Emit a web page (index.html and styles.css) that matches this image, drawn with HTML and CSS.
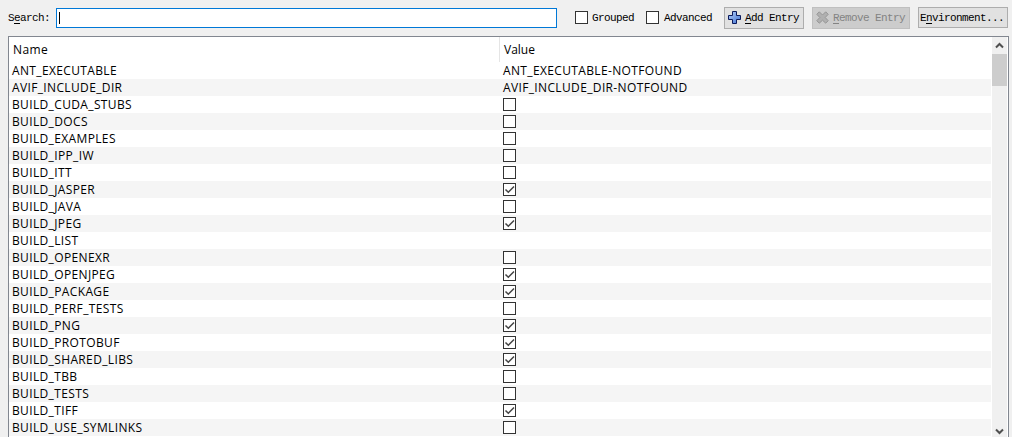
FILE: index.html
```
<!DOCTYPE html>
<html lang="en">
<head>
    <meta charset="utf-8" />
    <title>CMake Cache</title>
    <link rel="stylesheet" href="styles.css">
</head>
<body>
    <div class="toolbar">
        <label class="search-label" for="search">S<u>e</u>arch:</label>
        <div class="search" id="search"><span class="caret"></span></div>
        <div class="option grouped"><span class="check"></span>Grouped</div>
        <div class="option advanced"><span class="check"></span>Advanced</div>
        <div class="button add">
            <svg class="icon" width="14" height="14" viewBox="0 0 14 14">
                <defs>
                    <linearGradient id="blue" x1="0" y1="0" x2="1" y2="1">
                        <stop offset="0" stop-color="#b4d0fa" />
                        <stop offset="1" stop-color="#3e6fd0" />
                    </linearGradient>
                </defs>
                <path d="M4.5 .5h4v4h4v4h-4v4h-4v-4h-4v-4h4z" fill="url(#blue)" stroke="#0b1a5c" />
            </svg>
            <span><u>A</u>dd Entry</span>
        </div>
        <div class="button remove">
            <svg class="icon" width="14" height="14" viewBox="0 0 14 14">
                <path d="M3.3 .8L6.5 4L9.7 .8L12.2 3.3L9.2 6.5L12.2 9.7L9.7 12.2L6.5 9.2L3.3 12.2L.8 9.7L3.8 6.5L.8 3.3z" fill="#b0b0b0" stroke="#969696" />
            </svg>
            <span><u>R</u>emove Entry</span>
        </div>
        <div class="button env"><span>E<u>n</u>vironment...</span></div>
    </div>
    <div class="list">
        <div class="table">
            <div class="header"><span class="name">Name</span><span class="value">Value</span></div>
            <div class="row"><span class="name">ANT_EXECUTABLE</span><span class="value">ANT_EXECUTABLE-NOTFOUND</span></div>
            <div class="row"><span class="name">AVIF_INCLUDE_DIR</span><span class="value">AVIF_INCLUDE_DIR-NOTFOUND</span></div>
            <div class="row"><span class="name">BUILD_CUDA_STUBS</span><span class="check"></span></div>
            <div class="row"><span class="name">BUILD_DOCS</span><span class="check"></span></div>
            <div class="row"><span class="name">BUILD_EXAMPLES</span><span class="check"></span></div>
            <div class="row"><span class="name">BUILD_IPP_IW</span><span class="check"></span></div>
            <div class="row"><span class="name">BUILD_ITT</span><span class="check"></span></div>
            <div class="row"><span class="name">BUILD_JASPER</span><span class="check"><svg viewBox="0 0 11 11"><path d="M1.5 5.5L4.3 8.3L10 2.5" /></svg></span></div>
            <div class="row"><span class="name">BUILD_JAVA</span><span class="check"></span></div>
            <div class="row"><span class="name">BUILD_JPEG</span><span class="check"><svg viewBox="0 0 11 11"><path d="M1.5 5.5L4.3 8.3L10 2.5" /></svg></span></div>
            <div class="row"><span class="name">BUILD_LIST</span></div>
            <div class="row"><span class="name">BUILD_OPENEXR</span><span class="check"></span></div>
            <div class="row"><span class="name">BUILD_OPENJPEG</span><span class="check"><svg viewBox="0 0 11 11"><path d="M1.5 5.5L4.3 8.3L10 2.5" /></svg></span></div>
            <div class="row"><span class="name">BUILD_PACKAGE</span><span class="check"><svg viewBox="0 0 11 11"><path d="M1.5 5.5L4.3 8.3L10 2.5" /></svg></span></div>
            <div class="row"><span class="name">BUILD_PERF_TESTS</span><span class="check"></span></div>
            <div class="row"><span class="name">BUILD_PNG</span><span class="check"><svg viewBox="0 0 11 11"><path d="M1.5 5.5L4.3 8.3L10 2.5" /></svg></span></div>
            <div class="row"><span class="name">BUILD_PROTOBUF</span><span class="check"><svg viewBox="0 0 11 11"><path d="M1.5 5.5L4.3 8.3L10 2.5" /></svg></span></div>
            <div class="row"><span class="name">BUILD_SHARED_LIBS</span><span class="check"><svg viewBox="0 0 11 11"><path d="M1.5 5.5L4.3 8.3L10 2.5" /></svg></span></div>
            <div class="row"><span class="name">BUILD_TBB</span><span class="check"></span></div>
            <div class="row"><span class="name">BUILD_TESTS</span><span class="check"></span></div>
            <div class="row"><span class="name">BUILD_TIFF</span><span class="check"><svg viewBox="0 0 11 11"><path d="M1.5 5.5L4.3 8.3L10 2.5" /></svg></span></div>
            <div class="row"><span class="name">BUILD_USE_SYMLINKS</span><span class="check"></span></div>
        </div>
        <div class="scrollbar">
            <svg width="15" height="17" viewBox="0 0 15 17"><path d="M4 10.5L7.5 7L11 10.5" /></svg>
            <div class="thumb"></div>
            <svg class="down" width="15" height="17" viewBox="0 0 15 17"><path d="M4 9.5L7.5 13L11 9.5" /></svg>
        </div>
    </div>
</body>
</html>
```
FILE: styles.css
```
* {
    box-sizing: border-box;
}
body {
    margin: 0;
    width: 1012px;
    height: 437px;
    overflow: hidden;
    background: #f0f0f0;
    color: #000;
    font-family: "Open Sans", "Noto Sans", sans-serif;
    font-size: 12px;
}
.toolbar {
    display: flex;
    align-items: flex-start;
    height: 36px;
    padding: 7px 0 0 8px;
    font-family: "Liberation Mono", monospace;
    font-size: 11px;
    letter-spacing: -0.6px;
    line-height: 23px;
    white-space: pre;
}
.toolbar u {
    text-underline-offset: 2px;
}
.search-label {
    width: 48px;
}
.search {
    width: 501px;
    height: 20px;
    margin: 1px 18px 0 0;
    padding: 3px 2px;
    border: 1px solid #0078d7;
    background: #fff;
}
.caret {
    display: block;
    width: 1px;
    height: 12px;
    background: #000;
}
.option {
    display: flex;
    gap: 4px;
}
.option .check {
    margin-top: 4px;
}
.grouped {
    width: 71px;
}
.advanced {
    width: 78px;
    gap: 5px;
}
.check {
    flex: none;
    width: 13px;
    height: 13px;
    border: 1px solid #333;
    background: #fff;
}
.check svg {
    display: block;
    width: 11px;
    height: 11px;
    fill: none;
    stroke: #444;
    stroke-width: 1.5;
}
.button {
    display: flex;
    height: 22px;
    margin-right: 8px;
    border: 1px solid #adadad;
    background: #e1e1e1;
    line-height: 21px;
}
.icon {
    flex: none;
    margin: 3px 3px 0 3px;
}
.add {
    width: 80px;
}
.remove {
    width: 98px;
    border-color: #bfbfbf;
    background: #ccc;
    color: #838383;
}
.env {
    width: 90px;
    height: 21px;
    margin-right: 0;
    padding-left: 1px;
}
.list {
    display: flex;
    width: 1001px;
    height: 401px;
    margin-left: 8px;
    border: 1px solid #828790;
    border-bottom: 0;
    background: #fff;
}
.table {
    width: 982px;
    margin-right: 1px;
}
.header {
    display: flex;
    height: 25px;
    line-height: 25px;
}
.header .name {
    width: 491px;
    padding-left: 4px;
    border-right: 1px solid #e5e5e5;
    letter-spacing: 0.4px;
}
.header .value {
    padding-left: 4px;
}
.row {
    display: flex;
    height: 17px;
    padding-left: 3px;
    letter-spacing: 0.36px;
    line-height: 17px;
}
.row:nth-child(odd) {
    background: #f5f5f5;
}
.row .name {
    width: 491px;
}
.row .check {
    margin-top: 2px;
}
.scrollbar {
    display: flex;
    flex-direction: column;
    width: 15px;
    height: 400px;
    background: #f0f0f0;
}
.scrollbar svg {
    flex: none;
    fill: none;
    stroke: #505050;
    stroke-width: 2;
}
.thumb {
    height: 32px;
    background: #cdcdcd;
}
.down {
    margin-top: auto;
}
```
